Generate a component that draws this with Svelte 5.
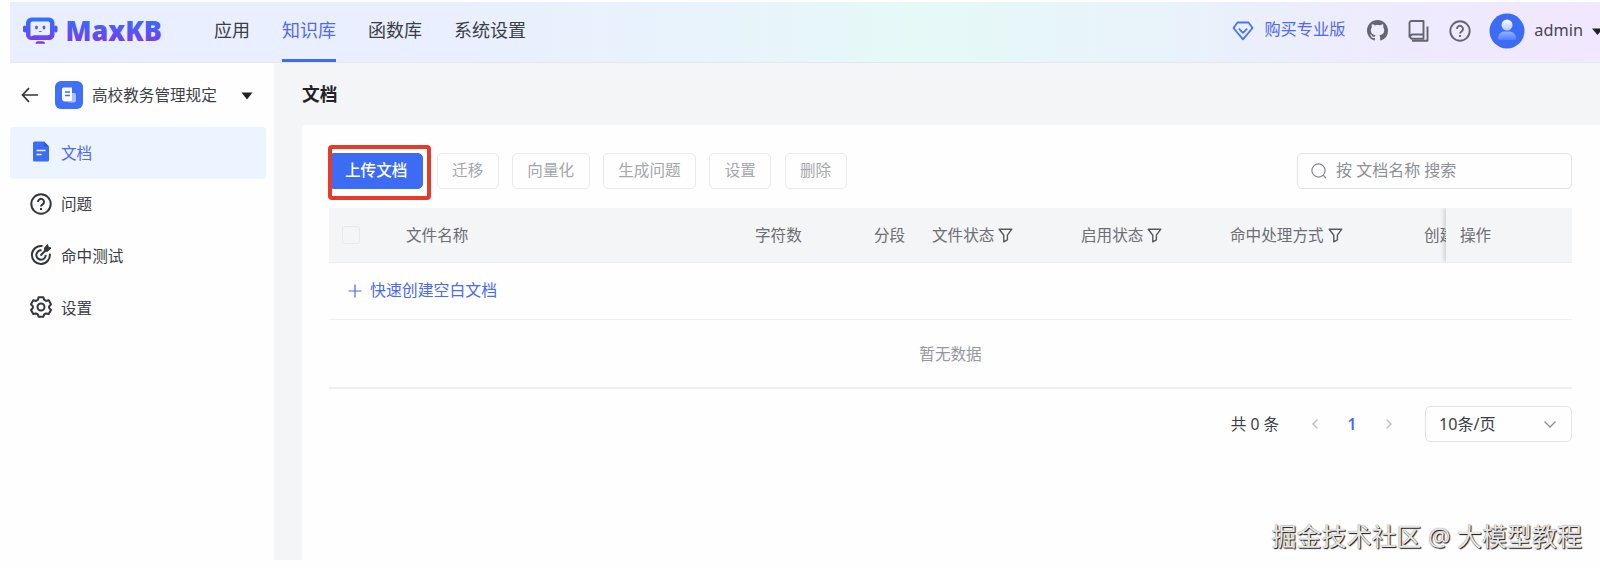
<script>
  const nav = [
    { label: '应用' },
    { label: '知识库', active: true },
    { label: '函数库' },
    { label: '系统设置' }
  ];
  const menu = [
    { label: '文档', icon: 'doc', active: true },
    { label: '问题', icon: 'help' },
    { label: '命中测试', icon: 'target' },
    { label: '设置', icon: 'gear' }
  ];
  const actions = ['迁移', '向量化', '生成问题', '设置', '删除'];
  const columns = [
    { label: '文件名称' },
    { label: '字符数' },
    { label: '分段' },
    { label: '文件状态', filter: true },
    { label: '启用状态', filter: true },
    { label: '命中处理方式', filter: true },
    { label: '创建' }
  ];
</script>

<div class="app">
  <header>
    <svg class="logo" width="142" height="34" viewBox="0 0 142 34">
      <defs>
        <linearGradient id="brand" gradientUnits="userSpaceOnUse" x1="0" y1="4" x2="0" y2="29">
          <stop offset="0" stop-color="#3370ff" />
          <stop offset="1" stop-color="#7a3be8" />
        </linearGradient>
      </defs>
      <g fill="url(#brand)">
        <rect x="1" y="11.500" width="3.500" height="7" rx="1.700" />
        <rect x="32" y="11.500" width="3.500" height="7" rx="1.700" />
        <path fill-rule="evenodd" d="M9.500 3.500h17.500a5.500 5.500 0 0 1 5.500 5.500v11.500a5.500 5.500 0 0 1-5.500 5.500H9.500a5.500 5.500 0 0 1-5.500-5.500V9a5.500 5.500 0 0 1 5.500-5.500zM10.500 7.500A2 2 0 0 0 8.500 9.500v13l3.500-1.200h14a2 2 0 0 0 2-2V9.500a2 2 0 0 0-2-2z" />
        <ellipse cx="14.500" cy="13.500" rx="1.400" ry="2" />
        <ellipse cx="22" cy="13.500" rx="1.400" ry="2" />
        <path d="M16.300 17h4q-2 2-4 0z" />
        <path d="M13.500 29.800q0-2.600 2.500-2.600h4.500q2.500 0 2.500 2.600z" />
      </g>
      <text x="43.500" y="27.200" textLength="96.500" lengthAdjust="spacingAndGlyphs" fill="url(#brand)">MaxKB</text>
    </svg>
    <nav>
      {#each nav as item}
        <a class:active={item.active}>{item.label}</a>
      {/each}
    </nav>
    <div class="tools">
      <svg class="gem" width="22" height="20" viewBox="0 0 22 20" fill="none" stroke="#4574f8" stroke-width="1.800" stroke-linejoin="round" stroke-linecap="round">
        <path d="M5.500 1.500h11l4 5.500L11 18.300 1.500 7z" /><path d="M7.300 8.200 11 11.800l3.700-3.600" />
      </svg>
      <span class="buy">购买专业版</span>
      <svg class="github" width="21" height="21" viewBox="0 0 16 16" fill="#64666f">
        <path d="M8 0C3.580 0 0 3.580 0 8c0 3.540 2.290 6.530 5.470 7.590.4.070.55-.17.55-.38 0-.19-.01-.82-.01-1.490-2.010.37-2.530-.49-2.690-.94-.09-.23-.48-.94-.82-1.130-.28-.15-.68-.52-.01-.53.63-.01 1.080.58 1.230.82.72 1.210 1.870.87 2.330.66.070-.52.28-.87.51-1.070-1.780-.2-3.640-.89-3.640-3.950 0-.87.31-1.590.82-2.150-.08-.2-.36-1.020.08-2.120 0 0 .67-.21 2.200.82.64-.18 1.320-.27 2-.27s1.360.09 2 .27c1.530-1.040 2.200-.82 2.200-.82.44 1.100.16 1.920.08 2.120.51.56.82 1.270.82 2.150 0 3.070-1.870 3.750-3.650 3.950.29.25.54.73.54 1.480 0 1.070-.01 1.930-.01 2.200 0 .21.15.46.55.38A8 8 0 0 0 16 8c0-4.420-3.580-8-8-8z" />
      </svg>
      <svg class="book" width="21" height="22" viewBox="0 0 21 22" fill="none" stroke="#64666f" stroke-width="1.900" stroke-linejoin="round">
        <path d="M1.500 17.500V3a2 2 0 0 1 2-2H15.500v13.500H4a2.200 2.200 0 0 0 0 4.300h11.500v-4.300" /><path d="M4 20.800H19.500V6.500" />
      </svg>
      <svg class="ask" width="22" height="22" viewBox="0 0 22 22" fill="none" stroke="#64666f" stroke-width="1.900">
        <circle cx="11" cy="11" r="9.700" /><path d="M8 8.900a3 3 0 1 1 4.600 2.500c-1 .7-1.600 1.100-1.600 2.200" /><path d="M11 14.900v2" />
      </svg>
      <svg class="avatar" width="36" height="36" viewBox="0 0 36 36">
        <defs>
          <linearGradient id="bust" x1="0" y1="0" x2="0" y2="1"><stop offset="0" stop-color="#93b1ff" /><stop offset="1" stop-color="#4f80fa" /></linearGradient>
          <linearGradient id="face" x1="0" y1="0" x2="0" y2="1"><stop offset="0" stop-color="#fff" /><stop offset="1" stop-color="#b3c8ff" /></linearGradient>
        </defs>
        <circle cx="18" cy="18" r="17.500" fill="#3b6cf3" />
        <path d="M9 26c0-5 3-7.500 7-7.500h4c4 0 7 2.500 7 7.500q0 1-1.500 1h-15Q9 27 9 26z" fill="url(#bust)" />
        <circle cx="18" cy="12" r="5.500" fill="url(#face)" />
      </svg>
      <span class="user">admin</span>
      <svg class="caret" width="13" height="8" viewBox="0 0 13 8"><path d="M1 .5h11L6.500 7z" fill="#1f2329" /></svg>
    </div>
  </header>

  <div class="body">
    <aside>
      <div class="kb">
        <svg width="18" height="16" viewBox="0 0 18 16" fill="none" stroke="#33363c" stroke-width="1.700"><path d="M17 8H1.500M8 1.200 1.500 8 8 14.800" /></svg>
        <svg class="kb-icon" width="28" height="28" viewBox="0 0 28 28">
          <rect width="28" height="28" rx="6" fill="#3f70f5" />
          <path d="M8.500 6.500h8.500v14H10a3 3 0 0 1-3-3V8Q7 6.500 8.500 6.500z" fill="#fff" />
          <path d="M17 12h2.500q1.500 0 1.500 1.500v5.500a2.500 2.500 0 0 1-2.500 2.500H12q4 0 5-2.500z" fill="#a9c1fb" />
          <path d="M10 11h5M10 14.500h5" stroke="#3f70f5" stroke-width="1.500" />
        </svg>
        <span>高校教务管理规定</span>
        <svg class="kb-caret" width="12" height="8" viewBox="0 0 12 8"><path d="M.5.5h11L6 7.500z" fill="#1f2329" /></svg>
      </div>
      {#each menu as item}
        <div class="item" class:active={item.active}>
          <svg width="22" height="22" viewBox="0 0 22 22" fill="none" stroke="#33363c" stroke-width="2">
            {#if item.icon === 'doc'}
              <path d="M4.500 0.500h9.500L19 5.500v13.500q0 1.500-1.500 1.500h-13Q3 20.500 3 19V2Q3 .5 4.500.5z" fill="#3b6cf3" stroke="none" />
              <path d="M14 .5v5h5z" fill="#2558dc" stroke="none" />
              <path d="M6.500 9.500h9M6.500 13.500h5" stroke="#e7efff" stroke-width="1.600" />
            {:else if item.icon === 'help'}
              <circle cx="11" cy="11" r="9.700" /><path d="M8 8.900a3 3 0 1 1 4.600 2.500c-1 .7-1.600 1.100-1.600 2.200M11 14.900v2" />
            {:else if item.icon === 'target'}
              <path d="M12.500 2.100a9 9 0 1 0 7.300 7.600" /><path d="M11.500 6.400a4.700 4.700 0 1 0 4.200 4.500" /><path d="m10.500 11.500 5.500-5.500" />
              <path d="M14.500 4 17.500.500l.8 2.700 2.700.8-3.500 3.300-2.700-.2z" fill="#33363c" stroke-width="1" />
            {:else}
              <path stroke-linejoin="round" d="M8.600 1.200h4.800l.9 2.700 1.800 1 2.700-.6 2.200 4-1.900 2.100v1.500l1.900 2.100-2.300 4-2.700-.6-1.800 1-.8 2.300H8.600l-.8-2.300-1.800-1-2.700.6L1 14l1.900-2.100v-1.500L1 8.300l2.300-4 2.700.6 1.800-1z" /><circle cx="11" cy="11" r="3.500" />
            {/if}
          </svg>
          <span>{item.label}</span>
        </div>
      {/each}
    </aside>

    <main>
      <h1>文档</h1>
      <section>
        <div class="toolbar">
          <div class="upload"><button class="primary">上传文档</button></div>
          {#each actions as label}
            <button disabled>{label}</button>
          {/each}
          <div class="search">
            <svg width="16" height="16" viewBox="0 0 16 16" fill="none" stroke="#85888e" stroke-width="1.200"><circle cx="7.500" cy="7.500" r="6.600" /><path d="m12.200 12.200 2.800 2.800" /></svg>
            <span>按 文档名称 搜索</span>
          </div>
        </div>

        <div class="thead">
          <div class="check"><i></i></div>
          {#each columns as col}
            <div class="cell">
              {col.label}
              {#if col.filter}
                <svg width="15" height="15" viewBox="0 0 15 15" fill="none" stroke="#55585e" stroke-width="1.400" stroke-linejoin="round"><path d="M1.200 1.200h12.600L9.400 7.200v4.600l-3.600 2V7.200z" /></svg>
              {/if}
            </div>
          {/each}
          <div class="fixed">操作</div>
        </div>
        <div class="create">
          <svg width="14" height="14" viewBox="0 0 14 14" stroke="#3f6cf2" stroke-width="1.200"><path d="M7 .5v13M.5 7h13" /></svg>
          <span>快速创建空白文档</span>
        </div>
        <div class="empty">暂无数据</div>

        <div class="pager">
          <span class="total">共 0 条</span>
          <svg width="8" height="12" viewBox="0 0 8 12" fill="none" stroke="#b8bbc0" stroke-width="1.300"><path d="M6.500 1.500 2 6l4.500 4.500" /></svg>
          <b>1</b>
          <svg width="8" height="12" viewBox="0 0 8 12" fill="none" stroke="#b8bbc0" stroke-width="1.300"><path d="M1.500 1.500 6 6l-4.500 4.500" /></svg>
          <div class="select">
            <span>10条/页</span>
            <svg width="14" height="9" viewBox="0 0 14 9" fill="none" stroke="#8b8e94" stroke-width="1.300"><path d="m1.500 1.500 5.500 5.500 5.500-5.500" /></svg>
          </div>
        </div>
      </section>
    </main>
  </div>
  <div class="watermark">掘金技术社区 @ 大模型教程</div>
</div>

<style>
  :global(body) { background: #fefefe; }
  .app {
    position: relative; box-sizing: border-box; width: 1600px; height: 568px; padding: 2px 0 8px 10px;
    overflow: hidden; display: flex; flex-direction: column; background: #fefefe; color: #3b3e44;
    font: 15.6px/24px "Noto Sans", "Noto Sans CJK SC", sans-serif;
  }
  svg { display: block; flex: none; }
  header {
    flex: none; box-sizing: border-box; height: 61px; display: flex; align-items: center;
    padding-left: 12px; border-bottom: 1px solid #e3e7ef;
    background: linear-gradient(90deg, #e9effe 0, #e9effe 28%, #e8f3fb 44%, #e6f9f7 57%, #e8f3fa 72%, #eeebfd 86%, #f1e7fe 100%);
  }
  .logo { margin-bottom: 2px; overflow: visible; }
  .logo text { font: 900 28.500px "Noto Sans", sans-serif; }
  nav { display: flex; gap: 32px; margin-left: 50px; align-self: stretch; }
  nav a { font-size: 18px; line-height: 57px; height: 57px; border-bottom: 3px solid transparent; }
  nav a.active { color: #5068f3; border-color: #3b6cf3; }
  .tools { display: flex; align-items: center; margin: 0 -4px 3px auto; }
  .gem { margin-right: 10px; }
  .buy { margin: -3px 22px 0 0; font-size: 16.200px; color: #5068f3; }
  .book { margin-left: 20px; }
  .ask { margin-left: 20px; }
  .avatar { margin-left: 18px; }
  .user { margin: -1px 8px 0 9px; font-size: 16.300px; color: #44474f; }
  .caret { margin-top: 2px; }
  .body { flex: 1; min-height: 0; display: flex; }
  aside { flex: none; width: 264px; }
  .kb { height: 64px; display: flex; align-items: center; padding-left: 11px; }
  .kb-icon { margin: 0 9px 0 16px; }
  .kb-caret { margin: 2px 0 0 24px; }
  .item { display: flex; align-items: center; gap: 9px; width: 236px; height: 51.600px; padding-left: 19.500px; border-radius: 4px; }
  .item svg { margin-bottom: 1px; }
  .item span { margin-left: .5px; }
  .item.active { background: #ecf4ff; color: #5068f3; }
  main { flex: 1; min-width: 0; background: #f4f5f7; padding-left: 28px; display: flex; flex-direction: column; }
  h1 { margin: 0; font-size: 17.700px; font-weight: 700; line-height: 62px; color: #1f2329; }
  section { flex: 1; background: #fefefe; padding: 28px 28px 0 27px; }
  .toolbar { display: flex; gap: 13.300px; height: 36px; }
  button {
    box-sizing: border-box; height: 36px; padding: 0 14.400px 3px; border: 1px solid #e8eaed; border-radius: 5px; background: #fefefe;
    font: inherit; line-height: 24px; color: #a5a7ac;
  }
  .upload { position: relative; }
  .upload::after { content: ''; position: absolute; left: -1px; top: -8px; width: 95px; height: 47px; border: 4px solid #e63a2b; border-radius: 4px; }
  .primary { padding: 0 15px 3px; border-color: #3b6cf3; background: #3b6cf3; color: #fff; font-weight: 500; }
  .search { box-sizing: border-box; width: 275px; margin-left: auto; display: flex; align-items: center; gap: 9.500px; padding-left: 12.500px; border: 1.500px solid #e0e3e6; border-radius: 5px; color: #8c8f95; font-size: 16px; }
  .search span { margin-bottom: 2px; }
  .thead {
    display: grid; grid-template-columns: 77px 349px 119px 58px 149px 149px 194px 1fr 126px;
    height: 54px; margin-top: 19px; border-bottom: 1px solid #e9ebee; background: #f4f5f7; color: #6b6e74; align-items: center; overflow: hidden;
  }
  .check i { display: block; width: 16px; height: 16px; margin-left: 13px; border: 1px solid #e6e8eb; border-radius: 3px; }
  .cell { display: flex; align-items: center; gap: 4px; white-space: nowrap; min-width: 0; }
  .cell:nth-last-child(2) { overflow: hidden; }
  .fixed { align-self: stretch; padding-left: 14px; line-height: 54px; background: #f4f5f7; box-shadow: -2px 0 4px #00000026; }
  .create { height: 56px; display: flex; align-items: center; gap: 8.500px; padding-left: 18.500px; border-bottom: 1px solid #eeeff1; font-size: 15.900px; color: #4a6bf2; }
  .create span { margin-bottom: 3px; }
  .empty { height: 67px; line-height: 69px; text-align: center; border-bottom: 2px solid #eceef0; color: #96989d; }
  .pager { display: flex; align-items: center; justify-content: flex-end; height: 36px; margin-top: 17px; }
  .total { margin-right: 32px; }
  .pager b { margin: 0 28.500px; font-weight: 600; color: #4a6bf2; }
  .select { box-sizing: border-box; width: 147px; height: 36px; margin-left: 32px; padding: 0 14px 0 13px; display: flex; align-items: center; justify-content: space-between; border: 1.500px solid #e0e3e6; border-radius: 5px; font-size: 16.100px; }
  .watermark { position: absolute; right: 18px; bottom: 14px; font-size: 25px; line-height: 36px; color: #e6e6e6; text-shadow: 1px 1px 1px #111, 0 0 1px #777; white-space: nowrap; }
</style>
